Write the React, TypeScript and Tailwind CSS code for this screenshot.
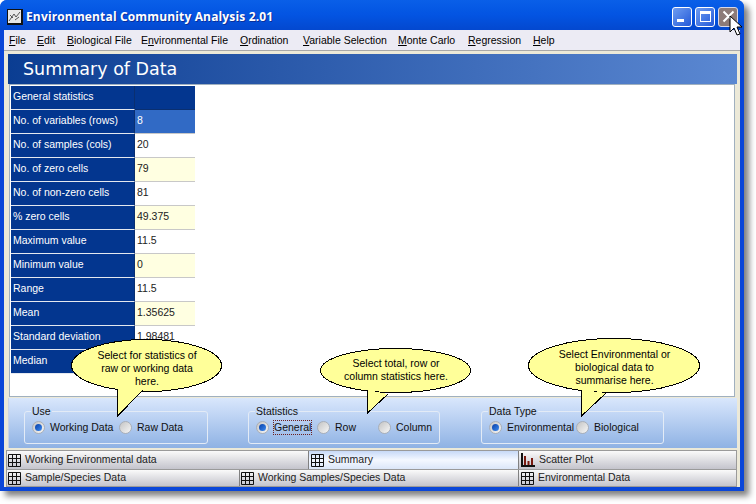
import React from "react";

const rows: [string, string, string][] = [
  ["No. of variables (rows)", "8", "bg-[#316ac5] text-white"],
  ["No. of samples (cols)", "20", "bg-white"],
  ["No. of zero cells", "79", "bg-[#ffffe1]"],
  ["No. of non-zero cells", "81", "bg-white"],
  ["% zero cells", "49.375", "bg-[#ffffe1]"],
  ["Maximum value", "11.5", "bg-white"],
  ["Minimum value", "0", "bg-[#ffffe1]"],
  ["Range", "11.5", "bg-white"],
  ["Mean", "1.35625", "bg-[#ffffe1]"],
  ["Standard deviation", "1.98481", "bg-white"],
  ["Median", "", "bg-[#ffffe1]"],
];

const menus: [string, string, string, string][] = [
  ["", "F", "ile", "w-[28px]"],
  ["", "E", "dit", "w-[30px]"],
  ["", "B", "iological File", "w-[74px]"],
  ["E", "n", "vironmental File", "w-[99px]"],
  ["", "O", "rdination", "w-[63px]"],
  ["", "V", "ariable Selection", "w-[95px]"],
  ["", "M", "onte Carlo", "w-[70px]"],
  ["", "R", "egression", "w-[65px]"],
  ["", "H", "elp", "w-[30px]"],
];

function GridIcon() {
  return (
    <svg width="13" height="13" viewBox="0 0 13 13" className="shrink-0">
      <path d="M.5.5h12v12H.5zM4.5.5v12M8.5.5v12M.5 4.5h12M.5 8.5h12" fill="none" stroke="#111" />
    </svg>
  );
}

function ChartIcon() {
  return (
    <svg width="14" height="14" viewBox="0 0 14 14" className="shrink-0">
      <path d="M1 0v14M0 13h14" fill="none" stroke="#111" strokeWidth="2" />
      <rect x="3" y="3" width="2" height="9" fill="#7a1a10" />
      <rect x="6.500" y="8" width="2" height="4" fill="#7a1a10" />
      <rect x="10" y="5" width="2" height="7" fill="#7a1a10" />
    </svg>
  );
}

function Radio({ on, label, w, focus }: { on?: boolean; label: string; w: string; focus?: boolean }) {
  return (
    <div className={`flex items-center whitespace-nowrap ${w}`}>
      <span className="flex h-[13px] w-[13px] shrink-0 items-center justify-center rounded-full border border-[#a9afb8] bg-gradient-to-br from-[#c4c4c4] to-[#f7f7f7]">
        {on && <span className="h-[7px] w-[7px] rounded-full bg-gradient-to-br from-[#0a3fa8] to-[#3d8bf0]" />}
      </span>
      <span className={`ml-[5px] leading-[13px] ${focus ? "outline-1 outline-dotted outline-[#6b1f1f]" : ""}`}>
        {label}
      </span>
    </div>
  );
}

function Group({ title, w, children }: { title: string; w: string; children: React.ReactNode }) {
  return (
    <fieldset className={`${w} h-[38px] shrink-0 rounded-[3px] border border-[#e3ebf6] pl-[6px]`}>
      <legend className="px-[1px] leading-[10px]">{title}</legend>
      <div className="flex h-[23px] items-center pl-[1px]">{children}</div>
    </fieldset>
  );
}

const tabOff = "bg-gradient-to-b from-[#fafafa] to-[#c4c4cc]";

export default function App() {
  return (
    <div className="relative h-[504px] w-[756px] overflow-hidden bg-white font-['Liberation_Sans',sans-serif] text-[10.5px] text-[#222]">
      <div className="relative flex h-[491px] w-[744px] flex-col rounded-t-[7px] bg-[#0a46d8] px-[4px] pb-[4px] shadow-[5px_5px_6px_rgba(0,0,0,0.5)]">
        {/* Title bar */}
        <div className="-mx-[4px] flex h-[30px] shrink-0 items-center rounded-t-[7px] bg-gradient-to-b from-[#0a5fe8] via-[#0354e2] to-[#0348cf] pl-[7px] pr-[6px] pt-[3px]">
          <svg width="16" height="16" viewBox="0 0 16 16" className="shrink-0">
            <rect width="16" height="16" fill="#111" />
            <rect x="1" y="1" width="13" height="13" fill="#e8e8e8" />
            <path d="M2 12 L7 5 L9 8 L13 3 M3 6 l3 3 M8 11 l4 -3" stroke="#555" fill="none" />
          </svg>
          <div className="ml-[3px] font-['Open_Sans',sans-serif] text-[12px] font-bold tracking-[0.15px] text-white [text-shadow:1px_1px_0_#0a2f9a]">
            Environmental Community Analysis 2.01
          </div>
          <div className="ml-auto flex gap-[3px]">
            <div className="flex h-[20px] w-[20px] items-end rounded-[3px] border border-white bg-gradient-to-br from-[#6f9cf0] to-[#2458d8] pb-[4px] pl-[4px]">
              <div className="h-[3px] w-[7px] bg-white" />
            </div>
            <div className="flex h-[20px] w-[20px] items-center justify-center rounded-[3px] border border-white bg-gradient-to-br from-[#6f9cf0] to-[#2458d8]">
              <div className="h-[11px] w-[11px] border border-t-[3px] border-white" />
            </div>
            <div className="flex h-[20px] w-[20px] items-center justify-center rounded-[3px] border border-[#d8d8e8] bg-[#8d7b78]">
              <svg width="13" height="13" viewBox="0 0 13 13">
                <path d="M1.500 1.500l10 10M11.500 1.500l-10 10" stroke="#fff" strokeWidth="2" />
              </svg>
            </div>
          </div>
        </div>

        {/* Menu bar */}
        <div className="flex h-[21px] shrink-0 items-center border-b border-[#a8a8a8] bg-[#ecebf4] pl-[5px] pt-[1px] text-black">
          {menus.map(([a, u, b, w]) => (
            <span key={a + u + b} className={`whitespace-nowrap ${w}`}>
              {a}
              <span className="underline">{u}</span>
              {b}
            </span>
          ))}
        </div>

        {/* Client */}
        <div className="flex min-h-0 flex-1 flex-col bg-[#ece9d8]">
          <div className="ml-[4px] mr-[3px] mt-[3px] flex h-[30px] shrink-0 items-center bg-gradient-to-r from-[#0a3d92] to-[#5b88d2] pl-[15px] pt-[1px] font-['DejaVu_Sans',sans-serif] text-[17.500px] text-white">
            Summary of Data
          </div>
          <div className="ml-[5px] mr-[5px] h-[313px] shrink-0 border border-[#a0b0bf] bg-white pl-[1px] pt-[1px]">
            <div className="grid w-[184px] grid-cols-[124px_60px]">
              <div className="h-[24px] border-b border-r border-b-[#e4e8ef] border-r-[#0a2f70] bg-[#03368f] pl-[2px] pt-[3px] text-white">
                General statistics
              </div>
              <div className="h-[24px] border-b border-[#0a2f70] bg-[#03368f]" />
              {rows.map(([l, v, c]) => (
                <React.Fragment key={l}>
                  <div className="h-[24px] border-b border-r border-b-[#e4e8ef] border-r-[#0a2f70] bg-[#03368f] pl-[2px] pt-[3px] text-white">
                    {l}
                  </div>
                  <div className={`h-[24px] border-b border-[#c8c8c8] pl-[2px] pt-[3px] ${c}`}>{v}</div>
                </React.Fragment>
              ))}
            </div>
          </div>

          {/* Options panel */}
          <div className="ml-[4px] mr-[3px] mt-[1px] flex h-[50px] shrink-0 items-start border-l border-[#c9d4e6] bg-gradient-to-b from-[#d9e7fc] to-[#8fb2e4] pl-[15px] pt-[8px] text-[#111]">
            <Group title="Use" w="w-[184px] mr-[40px]">
              <Radio on label="Working Data" w="w-[87px]" />
              <Radio label="Raw Data" w="w-auto" />
            </Group>
            <Group title="Statistics" w="w-[192px] mr-[41px]">
              <Radio on label="General" w="w-[61px]" focus />
              <Radio label="Row" w="w-[61px]" />
              <Radio label="Column" w="w-auto" />
            </Group>
            <Group title="Data Type" w="w-[183px]">
              <Radio on label="Environmental" w="w-[87px]" />
              <Radio label="Biological" w="w-auto" />
            </Group>
          </div>

          {/* Tabs */}
          <div className="ml-[2px] mr-[3px] mt-[2px] flex h-[19px] shrink-0 border-x border-t border-[#9a9a9a]">
            <div className={`flex w-[302px] items-center gap-[4px] border-r border-[#808080] pl-[1px] ${tabOff}`}>
              <GridIcon /> Working Environmental data
            </div>
            <div className="flex w-[210px] items-center gap-[4px] border-r border-[#808080] bg-gradient-to-b from-[#c7d9f7] via-[#f4f8ff] to-[#dbe6f8] pl-[2px]">
              <GridIcon /> Summary
            </div>
            <div className={`flex flex-1 items-center gap-[4px] pl-[2px] ${tabOff}`}>
              <ChartIcon /> Scatter Plot
            </div>
          </div>
          <div className="ml-[2px] mr-[3px] flex h-[18px] shrink-0 border border-[#9a9a9a]">
            <div className={`flex w-[233px] items-center gap-[4px] border-r border-[#808080] pl-[1px] ${tabOff}`}>
              <GridIcon /> Sample/Species Data
            </div>
            <div className={`flex w-[279px] items-center gap-[4px] border-r border-[#808080] pl-[1px] ${tabOff}`}>
              <GridIcon /> Working Samples/Species Data
            </div>
            <div className={`flex flex-1 items-center gap-[4px] pl-[2px] ${tabOff}`}>
              <GridIcon /> Environmental Data
            </div>
          </div>
        </div>
      </div>

      {/* Callouts */}
      <div className="absolute left-[71px] top-[339px] h-[78px] w-[152px] text-center leading-[13px] text-black">
        <svg width="152" height="78" className="absolute left-0 top-0" shapeRendering="crispEdges">
          <ellipse cx="75.500" cy="26.500" rx="75" ry="26" fill="#ffff99" stroke="#000" />
          <path d="M46.500 50 V77 L72 51" fill="#ffff99" stroke="#000" />
        </svg>
        <div className="relative pt-[10px]">
          Select for statistics of
          <br />
          raw or working data
          <br />
          here.
        </div>
      </div>
      <div className="absolute left-[320px] top-[348px] h-[68px] w-[152px] text-center leading-[13px] text-black">
        <svg width="152" height="68" className="absolute left-0 top-0" shapeRendering="crispEdges">
          <ellipse cx="75.500" cy="22.500" rx="75" ry="22" fill="#ffff99" stroke="#000" />
          <path d="M47.500 42 V65 L68 46" fill="#ffff99" stroke="#000" />
        </svg>
        <div className="relative pt-[9px]">
          Select total, row or
          <br />
          column statistics here.
        </div>
      </div>
      <div className="absolute left-[528px] top-[338px] h-[80px] w-[173px] text-center leading-[13px] text-black">
        <svg width="173" height="80" className="absolute left-0 top-0" shapeRendering="crispEdges">
          <ellipse cx="86" cy="27.500" rx="85.500" ry="27" fill="#ffff99" stroke="#000" />
          <path d="M53.500 52 V78 L78 55" fill="#ffff99" stroke="#000" />
        </svg>
        <div className="relative pt-[10px]">
          Select Environmental or
          <br />
          biological data to
          <br />
          summarise here.
        </div>
      </div>

      {/* Cursor */}
      <svg width="14" height="22" viewBox="0 0 14 22" className="absolute left-[729px] top-[15px]">
        <path d="M1 1 V17 L5 13 L8 20 L11 19 L8 12 H13 Z" fill="#fff" stroke="#000" />
      </svg>
    </div>
  );
}
